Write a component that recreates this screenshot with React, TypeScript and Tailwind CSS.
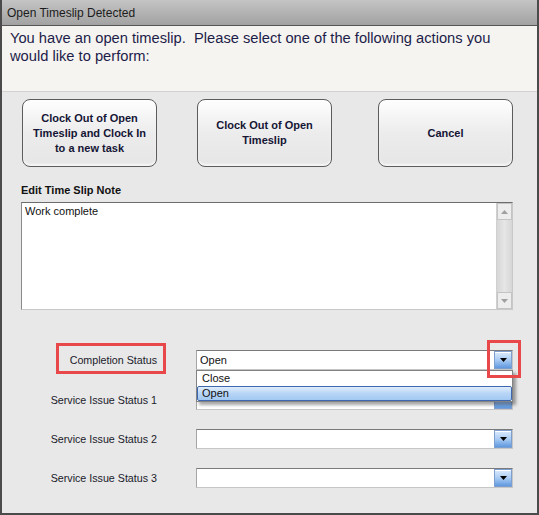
import React from 'react';

const Arrow = ({ up = false, color = '#000' }: { up?: boolean; color?: string }) => (
  <svg width="7" height="4" viewBox="0 0 7 4" className="block">
    <path d={up ? 'M0 4h7L3.5 0z' : 'M0 0h7L3.5 4z'} fill={color} />
  </svg>
);

const ComboButton = () => (
  <div className="w-[18px] h-full flex items-center justify-center border border-[#7d9fcf] bg-gradient-to-b from-[#dcebfc] via-[#a9cbf3] to-[#5f98df] shadow-[inset_0_1px_0_#ffffff]">
    <Arrow />
  </div>
);

const Combo = ({ value = '' }: { value?: string }) => (
  <div className="ml-[39px] w-[317px] h-[20px] flex bg-white border border-[#c6c6c6] border-t-[#7a7a7a] border-l-[#a5a5a5]">
    <div className="flex-1 pl-[3px] text-[11px] leading-[18px] text-[#111]">{value}</div>
    <ComboButton />
  </div>
);

const ActionButton = ({ label, className = '' }: { label: React.ReactNode; className?: string }) => (
  <button
    className={`w-[135px] h-[68px] rounded-[8px] border border-[#5c5c5c] bg-gradient-to-b from-[#fefefe] via-[#ececec] to-[#e6e6e6] shadow-[inset_0_-2px_2px_#f6f6f6] flex items-center justify-center px-2 text-center text-[11px] leading-[15px] font-bold text-[#151535] ${className}`}
  >
    {label}
  </button>
);

export default function App() {
  return (
    <div className="w-[539px] h-[515px] flex flex-col bg-[#e8e8e8] border-x-2 border-b-2 border-[#4b4b4b] font-['Liberation_Sans',Arial,sans-serif]">
      {/* window caption */}
      <div className="h-[26px] shrink-0 flex items-center pl-[5px] border-b border-[#555] bg-gradient-to-b from-[#c4c4c4] to-[#a2a2a2] text-[12px] text-[#1c1c1c]">
        Open Timeslip Detected
      </div>

      {/* prompt */}
      <div className="h-[66px] shrink-0 bg-[#f5f4f0] border-b border-[#d2d2d2] pl-[8px] pt-[3px] text-[14.7px] leading-[18px] text-[#1d1d4a] whitespace-pre-wrap">
        {'You have an open timeslip.  Please select one of the following actions you\nwould like to perform:'}
      </div>

      <div className="flex flex-col">
        <div className="flex mt-[7px] ml-[20px]">
          <ActionButton
            label={
              <span>
                Clock Out of Open
                <br />
                Timeslip and Clock In
                <br />
                to a new task
              </span>
            }
          />
          <ActionButton
            className="ml-[40px]"
            label={
              <span>
                Clock Out of Open
                <br />
                Timeslip
              </span>
            }
          />
          <ActionButton className="ml-[46px]" label="Cancel" />
        </div>

        <div className="mt-[16px] ml-[19px] text-[11px] leading-[15px] font-bold text-[#111]">Edit Time Slip Note</div>

        {/* note editor */}
        <div className="mt-[4px] ml-[19px] w-[492px] h-[108px] flex bg-white border border-[#c8c8c8] border-t-[#6c6c6c] border-l-[#8a8a8a]">
          <div className="flex-1 pl-[3px] pt-[2px] text-[11px] leading-[13px] text-[#111]">Work complete</div>
          <div className="w-[16px] flex flex-col bg-gradient-to-r from-[#d6d6d6] via-[#e6e6e6] to-[#d6d6d6] border-l border-[#d0d0d0]">
            <div className="h-[17px] flex items-center justify-center bg-[#ededed] border border-[#c4c4c4]">
              <Arrow up color="#a0a0a0" />
            </div>
            <div className="flex-1" />
            <div className="h-[17px] flex items-center justify-center bg-[#ededed] border border-[#c4c4c4]">
              <Arrow color="#a0a0a0" />
            </div>
          </div>
        </div>

        {/* status fields */}
        <div className="relative mt-[40px] h-[20px] flex items-center">
          <div className="w-[155px] text-right text-[10.7px] text-[#1a1a2a]">Completion Status</div>
          <Combo value="Open" />

          <div className="absolute left-[194px] top-[20px] w-[317px] h-[32px] z-10 bg-white border border-[#828282] shadow-[3px_3px_3px_rgba(0,0,0,0.35)] text-[11px] text-[#111]">
            <div className="h-[15px] leading-[15px] pl-[5px]">Close</div>
            <div className="h-[15px] leading-[13px] pl-[4px] rounded-[2px] border border-[#3d68b0] bg-gradient-to-b from-[#e0edfc] via-[#b7d5f6] to-[#a2c8f2]">
              Open
            </div>
          </div>

          <div className="absolute left-[54px] top-[-7px] w-[110px] h-[31px] border-[3px] border-[#e8484a] z-20" />
          <div className="absolute left-[485px] top-[-10px] w-[34px] h-[38px] border-[3px] border-[#e8484a] z-20" />
        </div>

        <div className="mt-[20px] h-[20px] flex items-center">
          <div className="w-[155px] text-right text-[10.7px] text-[#1a1a2a]">Service Issue Status 1</div>
          <Combo />
        </div>
        <div className="mt-[19px] h-[20px] flex items-center">
          <div className="w-[155px] text-right text-[10.7px] text-[#1a1a2a]">Service Issue Status 2</div>
          <Combo />
        </div>
        <div className="mt-[19px] h-[20px] flex items-center">
          <div className="w-[155px] text-right text-[10.7px] text-[#1a1a2a]">Service Issue Status 3</div>
          <Combo />
        </div>
      </div>
    </div>
  );
}
